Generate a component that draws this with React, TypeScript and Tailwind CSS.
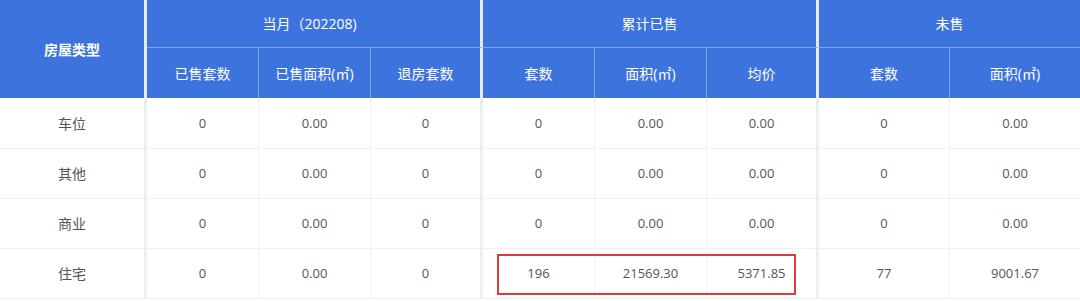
import React from 'react';

const font = { fontFamily: '"Open Sans", "Noto Sans CJK SC", sans-serif' };

const rows = [
  { type: '车位', m: ['0', '0.00', '0'], c: ['0', '0.00', '0.00'], u: ['0', '0.00'] },
  { type: '其他', m: ['0', '0.00', '0'], c: ['0', '0.00', '0.00'], u: ['0', '0.00'] },
  { type: '商业', m: ['0', '0.00', '0'], c: ['0', '0.00', '0.00'], u: ['0', '0.00'] },
  { type: '住宅', m: ['0', '0.00', '0'], c: ['196', '21569.30', '5371.85'], u: ['77', '9001.67'] },
];

const grid = 'grid grid-cols-[147px_112px_112px_112px_112px_112px_112px_131px_130px]';

const HeadCell: React.FC<{ children: React.ReactNode; className?: string }> = ({ children, className = '' }) => (
  <div className={`flex items-center justify-center text-white text-[14px] ${className}`}>{children}</div>
);

const BodyCell: React.FC<{ children: React.ReactNode; className?: string }> = ({ children, className = '' }) => (
  <div className={`flex items-center justify-center h-[50px] border-b border-[#f0f0f0] text-[#555] text-[13px] ${className}`}>{children}</div>
);

export default function App() {
  return (
    <div className="relative w-[1080px] h-[301px] bg-white overflow-hidden" style={font}>
      {/* header */}
      <div className={`${grid} grid-rows-[48px_50px] bg-[#3d73dc]`}>
        <HeadCell className="row-span-2 font-bold border-r-[3px] border-[#e3e9f5]">房屋类型</HeadCell>
        <HeadCell className="col-span-3 pr-[8px] border-b border-r-[3px] border-b-[#7fa3ea] border-r-[#e3e9f5]">当月（202208)</HeadCell>
        <HeadCell className="col-span-3 border-b border-r-[3px] border-b-[#7fa3ea] border-r-[#e3e9f5]">累计已售</HeadCell>
        <HeadCell className="col-span-2 border-b border-[#7fa3ea]">未售</HeadCell>
        <HeadCell className="border-r border-[#7fa3ea]">已售套数</HeadCell>
        <HeadCell className="border-r border-[#7fa3ea]">已售面积(㎡)</HeadCell>
        <HeadCell className="border-r-[3px] border-[#e3e9f5]">退房套数</HeadCell>
        <HeadCell className="border-r border-[#7fa3ea]">套数</HeadCell>
        <HeadCell className="border-r border-[#7fa3ea]">面积(㎡)</HeadCell>
        <HeadCell className="border-r-[3px] border-[#e3e9f5]">均价</HeadCell>
        <HeadCell className="border-r border-[#7fa3ea]">套数</HeadCell>
        <HeadCell>面积(㎡)</HeadCell>
      </div>

      {/* body */}
      <div className={`${grid} pt-px`}>
        {rows.map(r => (
          <React.Fragment key={r.type}>
            <BodyCell className="text-[14px] text-[#333] border-r-[3px] border-r-[#eceef4]">{r.type}</BodyCell>
            <BodyCell className="border-r border-r-[#f3f3f3]">{r.m[0]}</BodyCell>
            <BodyCell className="border-r border-r-[#f3f3f3]">{r.m[1]}</BodyCell>
            <BodyCell className="border-r-[3px] border-r-[#eceef4]">{r.m[2]}</BodyCell>
            <BodyCell className="border-r border-r-[#f3f3f3]">{r.c[0]}</BodyCell>
            <BodyCell className="border-r border-r-[#f3f3f3]">{r.c[1]}</BodyCell>
            <BodyCell className="border-r-[3px] border-r-[#eceef4]">{r.c[2]}</BodyCell>
            <BodyCell className="border-r border-r-[#f3f3f3]">{r.u[0]}</BodyCell>
            <BodyCell>{r.u[1]}</BodyCell>
          </React.Fragment>
        ))}
      </div>

      {/* highlight annotation */}
      <div className="absolute left-[497px] top-[254px] w-[299px] h-[41px] border-2 border-[#e0393e] pointer-events-none" />
    </div>
  );
}
